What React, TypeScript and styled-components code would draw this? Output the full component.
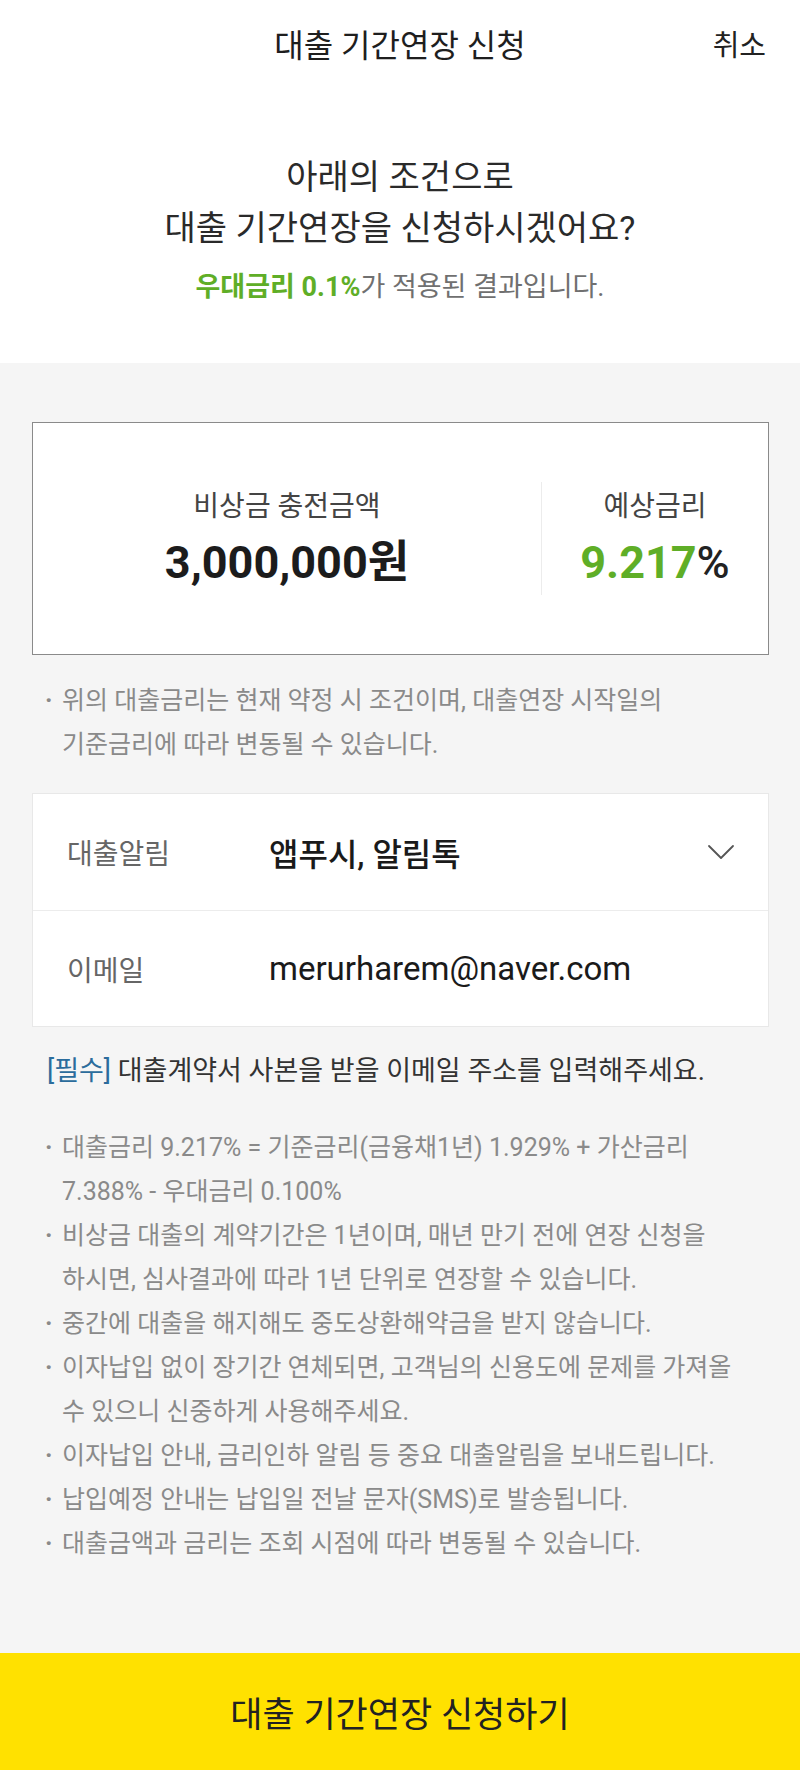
import styled, { createGlobalStyle } from "styled-components";

const GlobalStyle = createGlobalStyle`
  html, body {
    margin: 0;
    padding: 0;
    background: #f5f5f5;
  }
  body {
    font-family: Roboto, "Noto Sans CJK KR", sans-serif;
    color: #222;
  }
  * {
    box-sizing: border-box;
  }
`;

const notes: string[][] = [
  ["대출금리 9.217% = 기준금리(금융채1년) 1.929% + 가산금리", "7.388% - 우대금리 0.100%"],
  ["비상금 대출의 계약기간은 1년이며, 매년 만기 전에 연장 신청을", "하시면, 심사결과에 따라 1년 단위로 연장할 수 있습니다."],
  ["중간에 대출을 해지해도 중도상환해약금을 받지 않습니다."],
  ["이자납입 없이 장기간 연체되면, 고객님의 신용도에 문제를 가져올", "수 있으니 신중하게 사용해주세요."],
  ["이자납입 안내, 금리인하 알림 등 중요 대출알림을 보내드립니다."],
  ["납입예정 안내는 납입일 전날 문자(SMS)로 발송됩니다."],
  ["대출금액과 금리는 조회 시점에 따라 변동될 수 있습니다."],
];

export default function App() {
  return (
    <Page>
      <GlobalStyle />
      <TopSection>
        <TopBar>
          <Title>대출 기간연장 신청</Title>
          <CancelButton>취소</CancelButton>
        </TopBar>
        <Intro>
          <Heading>
            아래의 조건으로
            <br />
            대출 기간연장을 신청하시겠어요?
          </Heading>
          <SubText>
            <Green>우대금리 0.1%</Green>가 적용된 결과입니다.
          </SubText>
        </Intro>
      </TopSection>

      <Body>
        <SummaryCard>
          <SummaryCol>
            <SummaryLabel>비상금 충전금액</SummaryLabel>
            <SummaryValue>3,000,000원</SummaryValue>
          </SummaryCol>
          <SummaryCol $divider>
            <SummaryLabel>예상금리</SummaryLabel>
            <SummaryValue>
              <Green>9.217</Green>
              <Percent>%</Percent>
            </SummaryValue>
          </SummaryCol>
        </SummaryCard>

        <NoteList $top={24}>
          <NoteItem>
            <Dot>·</Dot>
            <span>
              위의 대출금리는 현재 약정 시 조건이며, 대출연장 시작일의
              <br />
              기준금리에 따라 변동될 수 있습니다.
            </span>
          </NoteItem>
        </NoteList>

        <FormCard>
          <FormRow>
            <FormLabel>대출알림</FormLabel>
            <FormValue>앱푸시, 알림톡</FormValue>
            <svg width="28" height="16" viewBox="0 0 28 16" fill="none">
              <path d="M2 2 L14 14 L26 2" stroke="#555" strokeWidth="1.8" strokeLinecap="round" strokeLinejoin="round" />
            </svg>
          </FormRow>
          <FormRow>
            <FormLabel>이메일</FormLabel>
            <FormValue $light>merurharem@naver.com</FormValue>
          </FormRow>
        </FormCard>

        <Required>
          <Tag>[필수]</Tag> 대출계약서 사본을 받을 이메일 주소를 입력해주세요.
        </Required>

        <NoteList $top={35}>
          {notes.map((lines, i) => (
            <NoteItem key={i}>
              <Dot>·</Dot>
              <span>
                {lines.map((line, j) => (
                  <span key={j}>
                    {j > 0 && <br />}
                    {line}
                  </span>
                ))}
              </span>
            </NoteItem>
          ))}
        </NoteList>
      </Body>

      <SubmitButton>대출 기간연장 신청하기</SubmitButton>
    </Page>
  );
}

const Page = styled.div`
  min-height: 1770px;
  display: flex;
  flex-direction: column;
  background: #f5f5f5;
`;

const TopSection = styled.section`
  background: #fff;
  padding-bottom: 58px;
`;

const TopBar = styled.header`
  height: 86px;
  position: relative;
  display: flex;
  align-items: center;
  justify-content: center;
`;

const Title = styled.h1`
  margin: 0;
  font-size: 32px;
  font-weight: 400;
  color: #1e1e1e;
`;

const CancelButton = styled.button`
  position: absolute;
  right: 34px;
  top: 50%;
  transform: translateY(-50%);
  border: none;
  background: none;
  padding: 0;
  font-family: inherit;
  font-size: 29px;
  color: #222;
`;

const Intro = styled.div`
  padding-top: 66px;
  text-align: center;
`;

const Heading = styled.h2`
  margin: 0;
  font-size: 34px;
  line-height: 51px;
  font-weight: 400;
  color: #2a2a2a;
`;

const SubText = styled.p`
  margin: 15px 0 0;
  font-size: 27px;
  line-height: 36px;
  color: #707070;
`;

const Green = styled.span`
  color: #5fae27;
  font-weight: 700;
`;

const Percent = styled.span`
  color: #222;
  font-weight: 500;
`;

const Body = styled.main`
  padding: 59px 31px 40px 32px;
  display: flex;
  flex-direction: column;
`;

const SummaryCard = styled.div`
  height: 233px;
  background: #fff;
  border: 1px solid #8a8a8a;
  display: grid;
  grid-template-columns: 508px 1fr;
  align-items: center;
`;

const SummaryCol = styled.div<{ $divider?: boolean }>`
  height: 113px;
  display: flex;
  flex-direction: column;
  align-items: center;
  justify-content: center;
  gap: 14px;
  border-left: ${(p) => (p.$divider ? "1px solid #ececec" : "none")};
`;

const SummaryLabel = styled.div`
  font-size: 28px;
  line-height: 34px;
  color: #444;
`;

const SummaryValue = styled.div`
  font-size: 45px;
  line-height: 50px;
  font-weight: 700;
  color: #1c1c1c;
`;

const NoteList = styled.ul<{ $top: number }>`
  list-style: none;
  margin: ${(p) => p.$top}px 0 0;
  padding: 0 0 0 13px;
`;

const NoteItem = styled.li`
  display: flex;
  font-size: 25px;
  line-height: 44px;
  color: #8a8a8a;
  white-space: nowrap;
`;

const Dot = styled.span`
  width: 17px;
  flex-shrink: 0;
  font-weight: 700;
`;

const FormCard = styled.div`
  margin-top: 26px;
  background: #fff;
  border: 1px solid #e8e8e8;
`;

const FormRow = styled.div`
  height: 116px;
  display: flex;
  align-items: center;
  padding: 0 33px 0 34px;
  & + & {
    border-top: 1px solid #ececec;
  }
`;

const FormLabel = styled.div`
  width: 202px;
  font-size: 28px;
  color: #666;
`;

const FormValue = styled.div<{ $light?: boolean }>`
  flex: 1;
  font-size: ${(p) => (p.$light ? "33px" : "32px")};
  font-weight: ${(p) => (p.$light ? 400 : 500)};
  color: #1a1a1a;
`;

const Required = styled.p`
  margin: 24px 0 0;
  padding-left: 15px;
  font-size: 27px;
  line-height: 40px;
  color: #333;
  white-space: nowrap;
`;

const Tag = styled.span`
  color: #2b6c9c;
`;

const SubmitButton = styled.button`
  margin-top: auto;
  height: 117px;
  border: none;
  background: #ffe100;
  font-family: inherit;
  font-size: 35px;
  color: #222;
  width: 100%;
`;
